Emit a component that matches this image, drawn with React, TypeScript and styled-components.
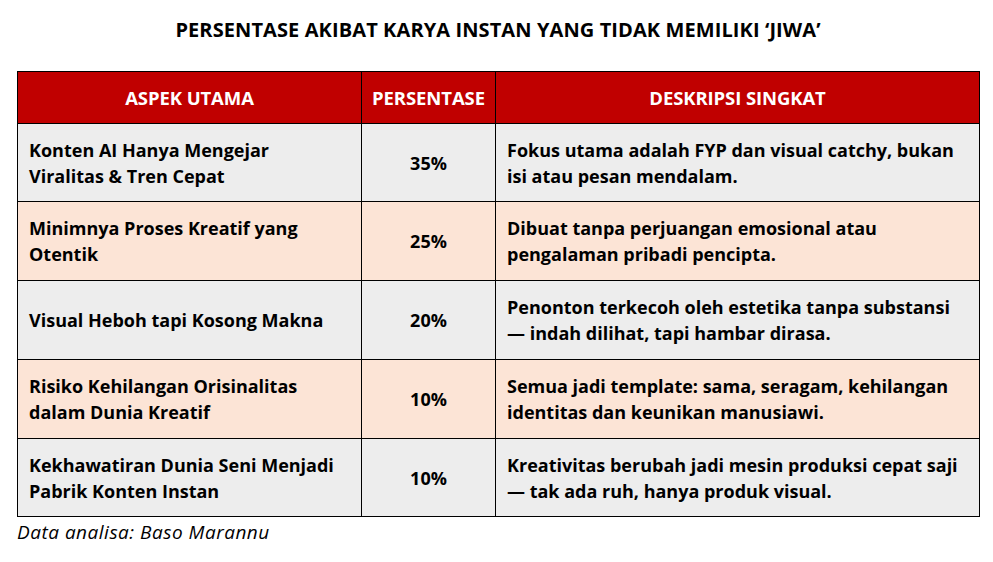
import React from 'react';
import styled, { createGlobalStyle } from 'styled-components';

const GlobalStyle = createGlobalStyle`
    html, body {
        margin: 0;
        padding: 0;
        background: #ffffff;
    }
    body {
        font-family: "Open Sans", Lato, "Liberation Sans", sans-serif;
        color: #000000;
    }
`;

type Row = {
    aspect: string[];
    percent: string;
    desc: string[];
    tone: 'grey' | 'peach';
    height: number;
};

const rows: Row[] = [
    {
        aspect: ['Konten AI Hanya Mengejar', 'Viralitas & Tren Cepat'],
        percent: '35%',
        desc: ['Fokus utama adalah FYP dan visual catchy, bukan', 'isi atau pesan mendalam.'],
        tone: 'grey',
        height: 78,
    },
    {
        aspect: ['Minimnya Proses Kreatif yang', 'Otentik'],
        percent: '25%',
        desc: ['Dibuat tanpa perjuangan emosional atau', 'pengalaman pribadi pencipta.'],
        tone: 'peach',
        height: 79,
    },
    {
        aspect: ['Visual Heboh tapi Kosong Makna'],
        percent: '20%',
        desc: ['Penonton terkecoh oleh estetika tanpa substansi', '— indah dilihat, tapi hambar dirasa.'],
        tone: 'grey',
        height: 79,
    },
    {
        aspect: ['Risiko Kehilangan Orisinalitas', 'dalam Dunia Kreatif'],
        percent: '10%',
        desc: ['Semua jadi template: sama, seragam, kehilangan', 'identitas dan keunikan manusiawi.'],
        tone: 'peach',
        height: 79,
    },
    {
        aspect: ['Kekhawatiran Dunia Seni Menjadi', 'Pabrik Konten Instan'],
        percent: '10%',
        desc: ['Kreativitas berubah jadi mesin produksi cepat saji', '— tak ada ruh, hanya produk visual.'],
        tone: 'grey',
        height: 78,
    },
];

const App = () => {
    return (
        <Page>
            <GlobalStyle />
            <Title>PERSENTASE AKIBAT KARYA INSTAN YANG TIDAK MEMILIKI ‘JIWA’</Title>
            <Table>
                <colgroup>
                    <col style={{ width: 344 }} />
                    <col style={{ width: 134 }} />
                    <col style={{ width: 484 }} />
                </colgroup>
                <thead>
                    <tr>
                        <HeadCell>ASPEK UTAMA</HeadCell>
                        <HeadCell>PERSENTASE</HeadCell>
                        <HeadCell>DESKRIPSI SINGKAT</HeadCell>
                    </tr>
                </thead>
                <tbody>
                    {rows.map((row, i) => (
                        <BodyRow key={i} tone={row.tone} style={{ height: row.height }}>
                            <TextCell>
                                {row.aspect.map((line, j) => (
                                    <Line key={j}>{line}</Line>
                                ))}
                            </TextCell>
                            <PercentCell>{row.percent}</PercentCell>
                            <TextCell>
                                {row.desc.map((line, j) => (
                                    <Line key={j}>{line}</Line>
                                ))}
                            </TextCell>
                        </BodyRow>
                    ))}
                </tbody>
            </Table>
            <Source>Data analisa: Baso Marannu</Source>
        </Page>
    );
};

const Page = styled.div`
    width: 993px;
    height: 562px;
    padding: 17px 0 0 17px;
    box-sizing: border-box;
    display: flex;
    flex-direction: column;
`;

const Title = styled.div`
    width: 962px;
    text-align: center;
    font-size: 20px;
    font-weight: 700;
    letter-spacing: 0.1px;
    line-height: 26px;
    margin-bottom: 28px;
`;

const Table = styled.table`
    width: 963px;
    border-collapse: collapse;
    table-layout: fixed;

    td, th {
        border: 1px solid #000000;
        padding: 0 0 0 11px;
        font-size: 18px;
        font-weight: 700;
        line-height: 26px;
        letter-spacing: 0;
    }
`;

const HeadCell = styled.th`
    height: 51px;
    background: #c00000;
    color: #ffffff;
    text-align: center;
    &&& {
        padding: 0;
        font-size: 18.5px;
        letter-spacing: -0.1px;
    }
`;

const BodyRow = styled.tr<{ tone: 'grey' | 'peach' }>`
    background: ${(p) => (p.tone === 'peach' ? '#fce4d6' : '#ededed')};
`;

const TextCell = styled.td`
    vertical-align: middle;
    white-space: nowrap;
`;

const Line = styled.div`
    display: block;
`;

const PercentCell = styled.td`
    text-align: center;
    &&& {
        padding: 0;
    }
`;

const Source = styled.div`
    margin-top: 3px;
    font-size: 19px;
    font-style: italic;
    line-height: 24px;
    letter-spacing: 0.5px;
`;

export default App;
